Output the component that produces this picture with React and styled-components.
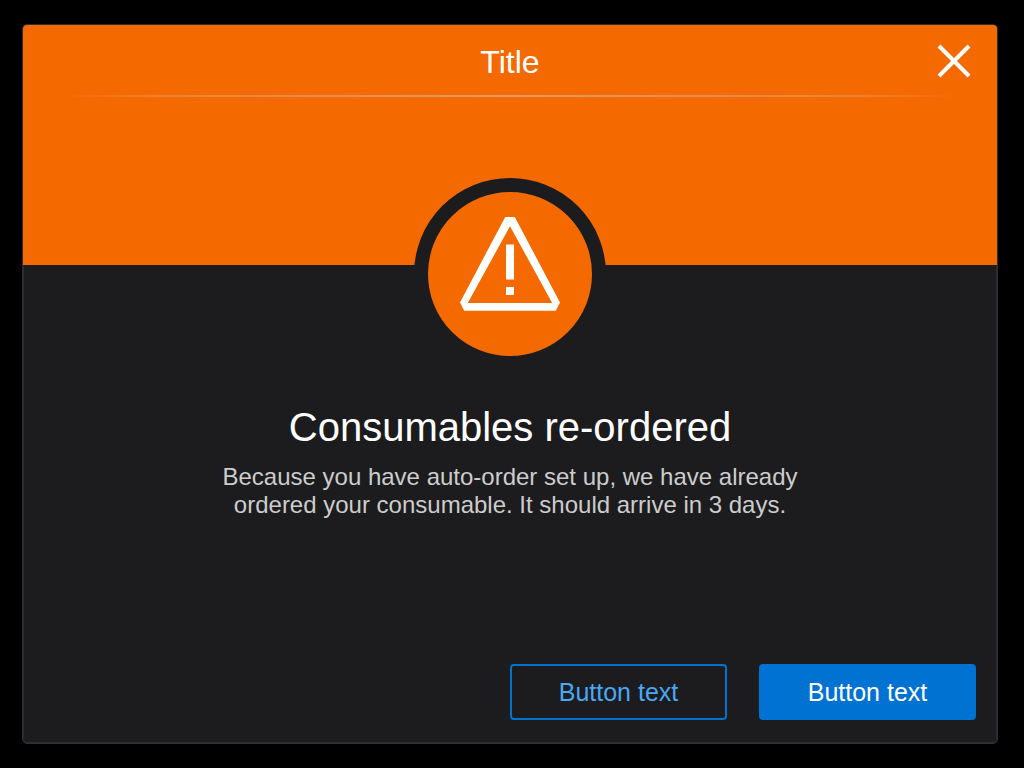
import styled, { createGlobalStyle } from 'styled-components';

const App = () => {
  return (
    <>
      <GlobalStyle />
      <Page>
        <Dialog role='alertdialog' aria-labelledby='heading' aria-describedby='message'>
          <Banner>
            <TitleBar>
              <Title>Title</Title>
              <CloseButton type='button' aria-label='Close'>
                <svg width='34' height='34' viewBox='0 0 34 34' aria-hidden='true'>
                  <path d='M2 2L32 32M32 2L2 32' stroke='#fff' strokeWidth='4' />
                </svg>
              </CloseButton>
            </TitleBar>
            <Divider />
          </Banner>
          <Content>
            <Badge>
              <WarningIcon />
            </Badge>
            <Heading id='heading'>Consumables re-ordered</Heading>
            <Message id='message'>
              Because you have auto-order set up, we have already ordered your
              consumable. It should arrive in 3 days.
            </Message>
            <Actions>
              <Button type='button'>Button text</Button>
              <Button type='button' $primary>
                Button text
              </Button>
            </Actions>
          </Content>
        </Dialog>
      </Page>
    </>
  );
};

export default App;

const WarningIcon = () => (
  <svg width='100' height='94' viewBox='0 0 100 94' aria-hidden='true'>
    <path
      fill='#fff'
      fillRule='evenodd'
      d='M45.2 0H54.8L100 85.4L95.8 93.8H4.2L0 85.4ZM50 9.2L7.8 86H92.2Z'
    />
    <path fill='#fff' d='M46 27.5H54V62.5H46ZM46 70H54V78H46Z' />
  </svg>
);

const GlobalStyle = createGlobalStyle`
  * {
    box-sizing: border-box;
  }

  body {
    margin: 0;
    background: #000;
    font-family: "Liberation Sans", Arial, sans-serif;
  }
`;

const Page = styled.div`
  display: flex;
  min-height: 100vh;
  padding: 24px 26px 24px 22px;
`;

const Dialog = styled.main`
  flex: 1;
  display: flex;
  flex-direction: column;
  overflow: hidden;
  background: #1c1c1e;
  border: 1px solid #2e2f32;
  border-radius: 5px;
`;

const Banner = styled.header`
  height: 240px;
  background: #f56a00;
`;

const TitleBar = styled.div`
  display: grid;
  grid-template-columns: 1fr auto 1fr;
  align-items: center;
  height: 70px;
  padding: 2px 26px 0;
`;

const Title = styled.h1`
  grid-column: 2;
  margin: 0;
  padding-top: 2px;
  color: #fff;
  font-size: 32px;
  font-weight: 400;
  line-height: 40px;
`;

const CloseButton = styled.button`
  justify-self: end;
  padding: 0;
  background: none;
  border: 0;
  cursor: pointer;

  svg {
    display: block;
  }
`;

const Divider = styled.div`
  height: 2px;
  margin: 0 42px;
  background: linear-gradient(
    to right,
    rgba(204, 204, 204, 0),
    rgba(204, 204, 204, 0.25) 10%,
    rgba(204, 204, 204, 0.5) 50%,
    rgba(204, 204, 204, 0.25) 90%,
    rgba(204, 204, 204, 0)
  );
`;

const Content = styled.section`
  flex: 1;
  display: flex;
  flex-direction: column;
  align-items: center;
  padding: 0 20px 22px;
  border: solid #2a2b2e;
  border-width: 0 1px 1px;
  border-radius: 0 0 4px 4px;
`;

const Badge = styled.div`
  flex: none;
  display: flex;
  justify-content: center;
  width: 192px;
  height: 192px;
  margin-top: -87px;
  padding-top: 25px;
  background: #f56a00;
  border: 14px solid #1c1c1e;
  border-radius: 50%;
`;

const Heading = styled.h2`
  margin: 33px 0 0;
  color: #fff;
  font-size: 40px;
  font-weight: 400;
  line-height: 48px;
  text-align: center;
`;

const Message = styled.p`
  max-width: 600px;
  margin: 12px 0 0;
  color: #ccc;
  font-size: 24px;
  line-height: 28px;
  text-align: center;
`;

const Actions = styled.div`
  display: flex;
  gap: 32px;
  align-self: flex-end;
  margin-top: auto;
`;

const Button = styled.button`
  min-width: 217px;
  height: 56px;
  padding: 0 24px;
  color: ${({ $primary }) => ($primary ? '#fff' : '#49a7f3')};
  font: inherit;
  font-size: 25px;
  background: ${({ $primary }) => ($primary ? '#0073d2' : 'transparent')};
  border: 2px solid #0073d2;
  border-radius: 4px;
  cursor: pointer;
`;
